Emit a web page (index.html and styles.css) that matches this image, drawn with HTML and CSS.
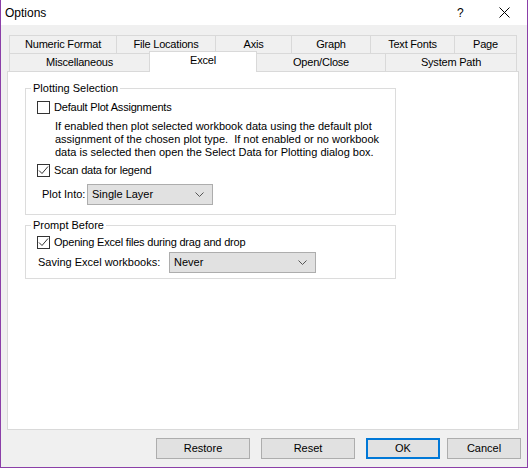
FILE: index.html
```html
<!DOCTYPE html>
<html>
<head>
<meta charset="utf-8">
<link rel="stylesheet" href="styles.css">
</head>
<body>
<div class="window">
  <div class="titlebar">
    <span class="title">Options</span>
    <span class="help">?</span>
    <span class="close"><svg width="11" height="11" viewBox="0 0 11 11"><path d="M0.5 0.5 L10.5 10.5 M10.5 0.5 L0.5 10.5" stroke="#000" stroke-width="1" fill="none"/></svg></span>
  </div>
  <div class="body">
    <div class="tabs">
      <div class="tabrow row1">
        <div class="tab t-num">Numeric Format</div>
        <div class="tab t-file">File Locations</div>
        <div class="tab t-axis">Axis</div>
        <div class="tab t-graph">Graph</div>
        <div class="tab t-fonts">Text Fonts</div>
        <div class="tab t-page last">Page</div>
      </div>
      <div class="tabrow row2">
        <div class="tab t-misc">Miscellaneous</div>
        <div class="tab t-excel selected">Excel</div>
        <div class="tab t-open noleft">Open/Close</div>
        <div class="tab t-sys last">System Path</div>
      </div>
    </div>
    <div class="panel">
      <div class="group g1">
        <div class="legend">Plotting Selection</div>
        <div class="cbrow cb-first">
          <span class="cb"></span><span class="cblabel">Default Plot Assignments</span>
        </div>
        <div class="desc">If enabled then plot selected workbook data using the default plot
assignment of the chosen plot type.  If not enabled or no workbook
data is selected then open the Select Data for Plotting dialog box.</div>
        <div class="cbrow cb-scan">
          <span class="cb checked"><svg width="11" height="11" viewBox="0 0 11 11"><path d="M1 5.5 L4 8.5 L10 1.5" stroke="#333" stroke-width="1" fill="none"/></svg></span><span class="cblabel">Scan data for legend</span>
        </div>
        <div class="plotrow">
          <span class="plotlabel">Plot Into:</span>
          <div class="combo combo-plot"><span>Single Layer</span><svg width="9" height="5" viewBox="0 0 9 5"><path d="M0.5 0.5 L4.5 4.5 L8.5 0.5" stroke="#555" stroke-width="1" fill="none"/></svg></div>
        </div>
      </div>
      <div class="group g2">
        <div class="legend">Prompt Before</div>
        <div class="cbrow cb-open">
          <span class="cb checked"><svg width="11" height="11" viewBox="0 0 11 11"><path d="M1 5.5 L4 8.5 L10 1.5" stroke="#333" stroke-width="1" fill="none"/></svg></span><span class="cblabel">Opening Excel files during drag and drop</span>
        </div>
        <div class="saverow">
          <span class="savelabel">Saving Excel workbooks:</span>
          <div class="combo combo-save"><span>Never</span><svg width="9" height="5" viewBox="0 0 9 5"><path d="M0.5 0.5 L4.5 4.5 L8.5 0.5" stroke="#555" stroke-width="1" fill="none"/></svg></div>
        </div>
      </div>
    </div>
    <div class="buttons">
      <div class="btn wide">Restore</div>
      <div class="btn wide">Reset</div>
      <div class="btn narrow default">OK</div>
      <div class="btn narrow cancel">Cancel</div>
    </div>
  </div>
</div>
</body>
</html>
```
FILE: styles.css
```css
* { box-sizing: border-box; }
html, body { margin: 0; padding: 0; background: #f0f0f0; }
body {
  font-family: "Liberation Sans", Arial, sans-serif;
  font-size: 11px;
  line-height: 13px;
  color: #000;
}
.window {
  width: 528px;
  height: 468px;
  border-left: 1px solid #8b3fa8;
  border-right: 1px solid #8b3fa8;
  border-bottom: 1px solid #8b3fa8;
  background: #f0f0f0;
  display: flex;
  flex-direction: column;
}
.titlebar {
  height: 25px;
  background: #fff;
  display: flex;
  align-items: center;
  flex: none;
}
.title {
  font-size: 12px;
  margin-left: 4px;
  flex: 1;
  line-height: 16px;
}
.help {
  font-size: 12px;
  width: 10px;
  margin-right: 32px;
  line-height: 16px;
}
.close {
  display: flex;
  margin-right: 17px;
}
.body {
  flex: 1;
  display: flex;
  flex-direction: column;
}
.tabs {
  margin-top: 10px;
  margin-left: 8px;
  width: 508px;
  letter-spacing: -0.2px;
}
.tabrow {
  display: flex;
  height: 18px;
}
.tab {
  border-top: 1px solid #d9d9d9;
  border-left: 1px solid #d9d9d9;
  background: #f0f0f0;
  text-align: center;
  line-height: 17px;
  white-space: nowrap;
}
.tab.last { border-right: 1px solid #d9d9d9; }
.tab.noleft { border-left: none; }
.t-num { width: 107px; }
.t-file { width: 99px; }
.t-axis { width: 76px; }
.t-graph { width: 79px; }
.t-fonts { width: 84px; }
.t-page { width: 63px; }
.t-misc { width: 140px; }
.t-excel { width: 108px; }
.t-open { width: 128px; }
.t-sys { width: 132px; }
.tab.selected {
  background: #fff;
  border-right: 1px solid #d9d9d9;
  margin-top: -2px;
  margin-bottom: -1px;
  position: relative;
  z-index: 1;
  line-height: 17px;
}
.panel {
  margin-left: 6px;
  width: 512px;
  height: 359px;
  background: #fff;
  border: 1px solid #d9d9d9;
  padding-top: 16px;
  padding-left: 17px;
  flex: none;
}
.group {
  width: 371px;
  border: 1px solid #dcdcdc;
  padding-left: 11px;
}
.g1 { padding-bottom: 9px; }
.g2 { margin-top: 10px; padding-bottom: 5px; }
.legend {
  width: fit-content;
  background: #fff;
  margin-top: -7px;
  margin-left: -6px;
  padding: 0 2px;
}
.cbrow {
  display: flex;
  align-items: center;
  height: 13px;
}
.cb-first { margin-top: 6px; }
.cb-scan { margin-top: 5px; }
.cb-open { margin-top: 4px; }
.cb {
  width: 13px;
  height: 13px;
  border: 1px solid #333;
  background: #fff;
  display: flex;
  align-items: center;
  justify-content: center;
  flex: none;
}
.cblabel { margin-left: 4px; white-space: nowrap; letter-spacing: -0.2px; }
.desc {
  margin-top: 6px;
  margin-left: 18px;
  white-space: pre;
}
.plotrow {
  display: flex;
  align-items: center;
  margin-top: 7px;
}
.plotlabel { margin-left: 5px; width: 45px; }
.saverow {
  display: flex;
  align-items: center;
  margin-top: 3px;
}
.savelabel { margin-left: 1px; width: 131px; }
.combo {
  height: 21px;
  background: #e1e1e1;
  border: 1px solid #adadad;
  display: flex;
  align-items: center;
  justify-content: space-between;
  padding: 0 8px 0 4px;
}
.combo-plot { width: 126px; }
.combo-save { width: 147px; }
.buttons {
  display: flex;
  justify-content: flex-end;
  margin-top: 8px;
  padding-right: 6px;
}
.btn {
  height: 21px;
  background: #e1e1e1;
  border: 1px solid #adadad;
  display: flex;
  align-items: center;
  justify-content: center;
  margin-left: 11px;
}
.btn.wide { width: 94px; }
.btn.narrow { width: 74px; }
.btn.default { border: 2px solid #0078d7; }
.btn.cancel { margin-left: 7px; }
```
